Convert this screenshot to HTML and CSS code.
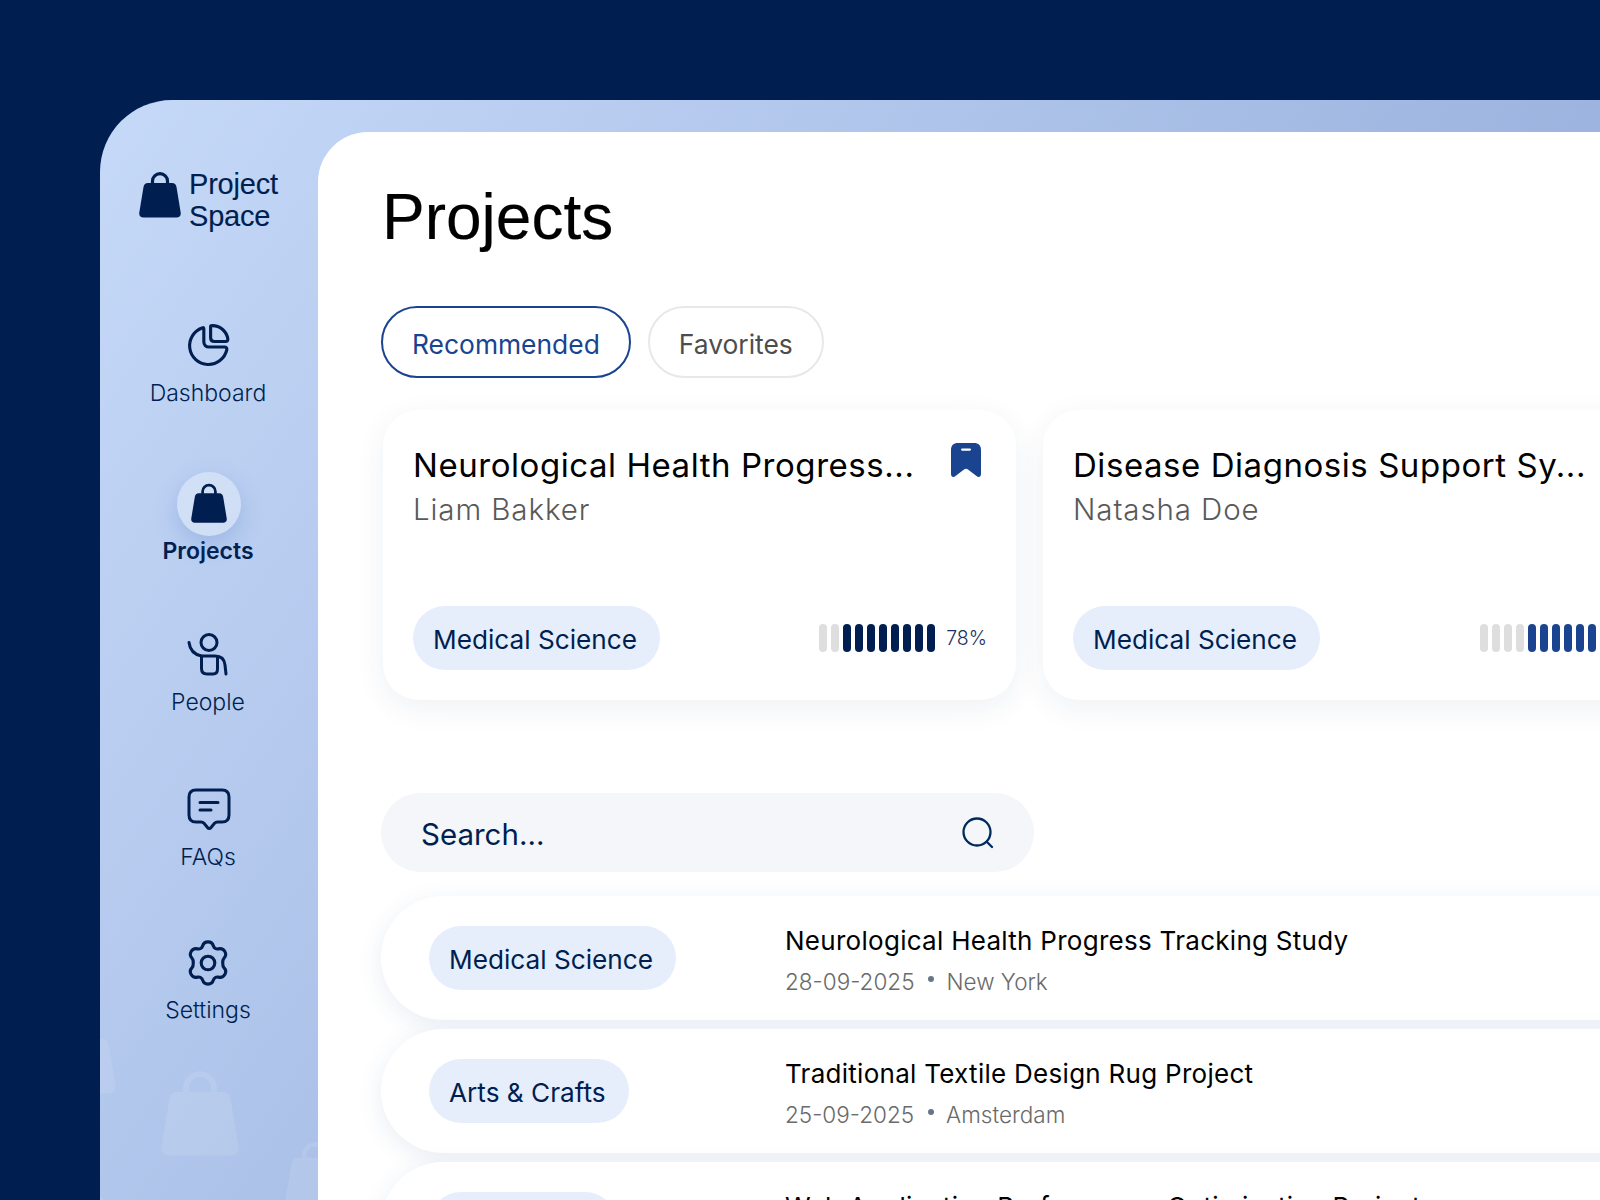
FILE: index.html
```html
<!DOCTYPE html>
<html lang="en">
<head>
<meta charset="utf-8">
<title>Project Space</title>
<link rel="stylesheet" href="styles.css">
</head>
<body>
<svg class="defs" width="0" height="0" aria-hidden="true">
  <defs>
    <symbol id="bag" viewBox="0 0 42 46">
      <path d="M13.500 13V9a7.500 7.400 0 0 1 15 0v4" fill="none" stroke="currentColor" stroke-width="3.200"/>
      <path d="M9 11h24c2.600 0 4 1.500 4.500 4l4.200 25.500c.5 3-1.300 5-4.200 5H4.500c-2.900 0-4.700-2-4.200-5L4.500 15C5 12.500 6.400 11 9 11z" fill="currentColor"/>
    </symbol>
  </defs>
</svg>
<div class="window">
  <aside class="sidebar">
    <svg class="ghost ghost-a"><use href="#bag"/></svg>
    <svg class="ghost ghost-b"><use href="#bag"/></svg>
    <svg class="ghost ghost-c"><use href="#bag"/></svg>
    <svg class="ghost ghost-d"><use href="#bag"/></svg>
    <div class="brand">
      <svg class="brand-bag"><use href="#bag"/></svg>
      <div class="brand-name">Project<br>Space</div>
    </div>
    <nav class="nav">
      <a class="nav-item nav-dashboard">
        <span class="nav-icon">
          <svg viewBox="0 0 44 44" class="line-icon"><path d="M17 4.500A18 18 0 1 0 40 25.500c.3-1.400-.7-2.500-2-2.500H23c-3 0-5-2-5-5V5.500c0-1-.5-1.200-1-1z"/><path d="M25.500 2.500A15 15 0 0 1 41 15.500c.1 1.400-.8 2.200-2 2.200H28c-2.200 0-3.500-1.300-3.500-3.500V3.500c0-.6.400-1 1-1z"/></svg>
        </span>
        <span class="nav-label">Dashboard</span>
      </a>
      <a class="nav-item nav-projects active">
        <span class="nav-icon nav-icon-active"><svg class="active-bag"><use href="#bag"/></svg></span>
        <span class="nav-label">Projects</span>
      </a>
      <a class="nav-item nav-people">
        <span class="nav-icon">
          <svg viewBox="0 0 44 44" class="line-icon"><circle cx="23" cy="9.500" r="8"/><path d="M3 9.500c.8 6.500 5 12 12.500 13.500H29c6 0 9.500 3.500 10 9l1 9"/><path d="M15.500 23v12.500c0 3.500 2 5.500 5.500 5.500h6c3 0 4.500-2 4.500-5V24"/></svg>
        </span>
        <span class="nav-label">People</span>
      </a>
      <a class="nav-item nav-faqs">
        <span class="nav-icon">
          <svg viewBox="0 0 44 44" class="line-icon"><path d="M9 2h26c4.500 0 7 2.500 7 7v18c0 4.500-2.500 7-7 7h-4.500c-1.300 0-2.200.4-3 1.300l-3.500 4.200c-1 1.300-2.500 1.300-3.500 0l-3.500-4.200c-.8-.9-1.700-1.300-3-1.300H9c-4.500 0-7-2.500-7-7V9c0-4.500 2.500-7 7-7z"/><path d="M13 14.500h18M13 22h11"/></svg>
        </span>
        <span class="nav-label">FAQs</span>
      </a>
      <a class="nav-item nav-settings">
        <span class="nav-icon">
          <svg viewBox="0 0 44 44" class="line-icon"><circle cx="22" cy="22" r="6.500"/><path d="M16.800 5.800C17.500 3.200 19.500 1.800 22 1.800s4.500 1.400 5.200 4c.6 2 2.700 3.200 4.700 2.700 2.600-.7 4.900.3 6.200 2.500s1 4.600-.9 6.500c-1.500 1.500-1.500 7.500 0 9 1.900 1.900 2.200 4.300.9 6.500s-3.600 3.200-6.200 2.500c-2-.5-4.100.7-4.700 2.700-.7 2.600-2.700 4-5.200 4s-4.500-1.400-5.200-4c-.6-2-2.700-3.200-4.700-2.700-2.600.7-4.900-.3-6.200-2.500s-1-4.600.9-6.500c1.500-1.500 1.500-7.500 0-9-1.900-1.900-2.200-4.300-.9-6.500s3.600-3.200 6.200-2.500c2 .5 4.100-.7 4.700-2.700z"/></svg>
        </span>
        <span class="nav-label">Settings</span>
      </a>
    </nav>
  </aside>
  <main class="main">
    <h1 class="page-title">Projects</h1>
    <div class="tabs">
      <button class="tab tab-active">Recommended</button>
      <button class="tab">Favorites</button>
    </div>
    <section class="cards">
      <article class="card">
        <div class="card-head">
          <div class="card-text">
            <h2 class="card-title">Neurological Health Progress...</h2>
            <p class="card-author">Liam Bakker</p>
          </div>
          <svg class="bookmark" viewBox="0 0 30 34"><path d="M7 0h16c4.500 0 7 2.500 7 7v24c0 2.800-2.500 3.800-4.500 2L17 26.500c-1.300-1-2.700-1-4 0L4.500 33C2.500 34.800 0 33.800 0 31V7C0 2.500 2.500 0 7 0z"/><rect x="10" y="5.500" width="10" height="2.200" rx="1.100" class="bookmark-slot"/></svg>
        </div>
        <div class="card-foot">
          <span class="pill">Medical Science</span>
          <div class="progress">
            <span class="bar"></span><span class="bar"></span>
            <span class="bar on"></span><span class="bar on"></span><span class="bar on"></span><span class="bar on"></span><span class="bar on"></span><span class="bar on"></span><span class="bar on"></span><span class="bar on"></span>
            <span class="percent">78%</span>
          </div>
        </div>
      </article>
      <article class="card">
        <div class="card-head">
          <div class="card-text">
            <h2 class="card-title">Disease Diagnosis Support Sy...</h2>
            <p class="card-author">Natasha Doe</p>
          </div>
        </div>
        <div class="card-foot">
          <span class="pill">Medical Science</span>
          <div class="progress progress-second">
            <span class="bar"></span><span class="bar"></span><span class="bar"></span><span class="bar"></span>
            <span class="bar on-blue"></span><span class="bar on-blue"></span><span class="bar on-blue"></span><span class="bar on-blue"></span><span class="bar on-blue"></span><span class="bar on-blue"></span>
            <span class="percent">60%</span>
          </div>
        </div>
      </article>
    </section>
    <div class="search">
      <span class="search-text">Search...</span>
      <svg class="search-icon" viewBox="0 0 32 32"><circle cx="15" cy="15" r="13.500"/><path d="M25 25l5 5"/></svg>
    </div>
    <section class="rows">
      <article class="row">
        <div class="row-tag"><span class="pill">Medical Science</span></div>
        <div class="row-body">
          <h3 class="row-title">Neurological Health Progress Tracking Study</h3>
          <p class="row-meta">28-09-2025<span class="dot"></span>New York</p>
        </div>
      </article>
      <article class="row">
        <div class="row-tag"><span class="pill">Arts &amp; Crafts</span></div>
        <div class="row-body">
          <h3 class="row-title">Traditional Textile Design Rug Project</h3>
          <p class="row-meta">25-09-2025<span class="dot"></span>Amsterdam</p>
        </div>
      </article>
      <article class="row">
        <div class="row-tag"><span class="pill">Technology</span></div>
        <div class="row-body">
          <h3 class="row-title">Web Application Performance Optimization Project</h3>
          <p class="row-meta">22-09-2025<span class="dot"></span>Berlin</p>
        </div>
      </article>
    </section>
  </main>
</div>
</body>
</html>
```
FILE: styles.css
```css
* { box-sizing: border-box; }
html, body { height: 100%; }
body {
  margin: 0;
  height: 1200px;
  overflow: hidden;
  background: #001f50;
  font-family: Inter, "Noto Sans", sans-serif;
  color: #001f50;
}
.defs { display: block; height: 0; }
.window {
  margin: 100px 0 0 100px;
  height: 1100px;
  display: flex;
  align-items: stretch;
  border-top-left-radius: 72px;
  overflow: hidden;
  background: linear-gradient(125deg, #c6d9f8 0%, #9cb4df 66%);
  padding-top: 32px;
}
.sidebar {
  position: relative;
  flex: 0 0 218px;
  margin-top: -32px;
  overflow: hidden;
}
.ghost { position: absolute; color: #fff; opacity: .1; }
.ghost-a { left: 61px; top: 970px; width: 78px; height: 88px; }
.ghost-b { left: -50px; top: 922px; width: 66px; height: 72px; }
.ghost-c { left: 185px; top: 1040px; width: 60px; height: 70px; }
.ghost-d { left: -36px; top: 1084px; width: 44px; height: 50px; }

.brand {
  display: flex;
  align-items: center;
  gap: 8px;
  padding: 68px 0 0 39px;
}
.brand-bag { width: 42px; height: 46px; color: #001f50; margin-bottom: 11px; }
.brand-name {
  font-family: "Liberation Sans", Arial, sans-serif;
  font-size: 29px;
  line-height: 32px;
  letter-spacing: -.2px;
  color: #001f50;
  -webkit-text-stroke: .12px #001f50;
}
.nav { display: flex; flex-direction: column; align-items: center; margin-top: 82px; padding-right: 2px; }
.nav-item { display: flex; flex-direction: column; align-items: center; height: 155px; text-decoration: none; }
.nav-projects { margin-top: 3px; }
.nav-people { margin-top: -4px; }
.nav-settings { margin-top: -2px; }
.nav-icon { width: 64px; height: 64px; display: flex; align-items: center; justify-content: center; }
.line-icon { width: 46px; height: 46px; fill: none; stroke: #001f50; stroke-width: 3; stroke-linecap: round; stroke-linejoin: round; }
.nav-people .line-icon { width: 44px; height: 44px; }
.nav-faqs .line-icon { width: 44px; height: 44px; transform: translateX(1px); }
.nav-icon-active { border-radius: 50%; background: rgba(255,255,255,.33); box-shadow: 0 8px 22px rgba(90,130,200,.3); transform: translateX(1px); }
.active-bag { width: 36px; height: 41px; color: #001f50; margin-top: -1px; }
.nav-label { margin-top: -1px; font-size: 23px; line-height: 32px; font-weight: 350; color: #001f50; }
.active .nav-label { font-weight: 600; }

.main {
  flex: 1 1 auto;
  min-width: 0;
  background: #fff;
  border-top-left-radius: 50px;
  padding: 48px 0 0 63px;
  overflow: hidden;
}
.page-title {
  margin: 0;
  font-family: "Liberation Sans", Arial, sans-serif;
  font-weight: 400;
  font-size: 64px;
  line-height: 74px;
  color: #000;
  margin-left: 1px;
  -webkit-text-stroke: .15px #000;
}
.tabs { display: flex; gap: 17px; margin-top: 52px; }
.tab {
  height: 72px;
  padding: 3px 29px 0;
  border-radius: 36px;
  border: 2px solid #e8e8e8;
  background: #fff;
  font-family: inherit;
  font-size: 26.4px;
  color: #4d4d4d;
}
.tab-active { border-color: #1a4490; color: #1a4490; }

.cards { display: flex; gap: 27px; margin-top: 32px; margin-left: 2px; width: 1400px; }
.card {
  flex: 0 0 633px;
  height: 290px;
  border-radius: 36px;
  background: #fff;
  padding: 30px 29px 30px 30px;
  box-shadow: 0 8px 30px rgba(20,50,100,.07);
  display: flex;
  flex-direction: column;
  justify-content: space-between;
}
.card-head { display: flex; justify-content: space-between; align-items: flex-start; }
.card-text { padding-top: 2px; }
.card-title { margin: 0; font-size: 33px; line-height: 46px; font-weight: 400; letter-spacing: .55px; color: #000; white-space: nowrap; }
.card-author { margin: 0; font-size: 29.5px; line-height: 43px; letter-spacing: .9px; font-weight: 350; color: #595959; }
.bookmark { width: 30px; height: 34px; fill: #1a4490; margin-top: 3px; margin-right: 6px; }
.bookmark-slot { fill: #fff; }
.card-foot { display: flex; justify-content: space-between; align-items: center; }
.pill {
  display: inline-flex;
  align-items: center;
  height: 64px;
  padding: 2px 23px 0 20px;
  border-radius: 32px;
  background: #e6eefc;
  font-size: 26.2px;
  color: #001f50;
  white-space: nowrap;
}
.progress { display: flex; align-items: center; gap: 4px; }
.progress-second { margin-right: -2px; }
.bar { width: 8px; height: 28px; border-radius: 4px; background: #dedede; }
.bar.on { background: #001f50; }
.bar.on-blue { background: #1a4490; }
.percent { margin-left: 7px; font-size: 19.500px; font-weight: 350; color: #1a3060; white-space: nowrap; }

.search {
  margin-top: 93px;
  width: 653px;
  height: 79px;
  border-radius: 40px;
  background: #f4f6f9;
  display: flex;
  align-items: center;
  justify-content: space-between;
  padding: 0 40px;
}
.search-text { font-size: 29.500px; padding-top: 2px; color: #001f50; }
.search-icon { width: 32px; height: 32px; fill: none; stroke: #002a5c; stroke-width: 2.300; stroke-linecap: round; }

.rows { margin-top: 24px; display: flex; flex-direction: column; gap: 9px; width: 1400px; }
.row {
  height: 124px;
  flex: none;
  border-radius: 62px;
  background: #fff;
  box-shadow: 0 6px 24px rgba(40,80,150,.1);
  display: flex;
  align-items: center;
  padding-left: 48px;
}
.row-tag { flex: 0 0 356px; }
.row-body { display: flex; flex-direction: column; gap: 7px; padding-top: 5px; }
.row-title { margin: 0; font-size: 26px; line-height: 36px; font-weight: 400; letter-spacing: .28px; color: #000; white-space: nowrap; }
.row-meta { margin: 0; font-size: 22.500px; line-height: 32px; font-weight: 350; color: #6a6a6a; display: flex; align-items: center; }
.dot { width: 6px; height: 6px; border-radius: 50%; background: #66758a; margin: -6px 12px 0 14px; }
```
